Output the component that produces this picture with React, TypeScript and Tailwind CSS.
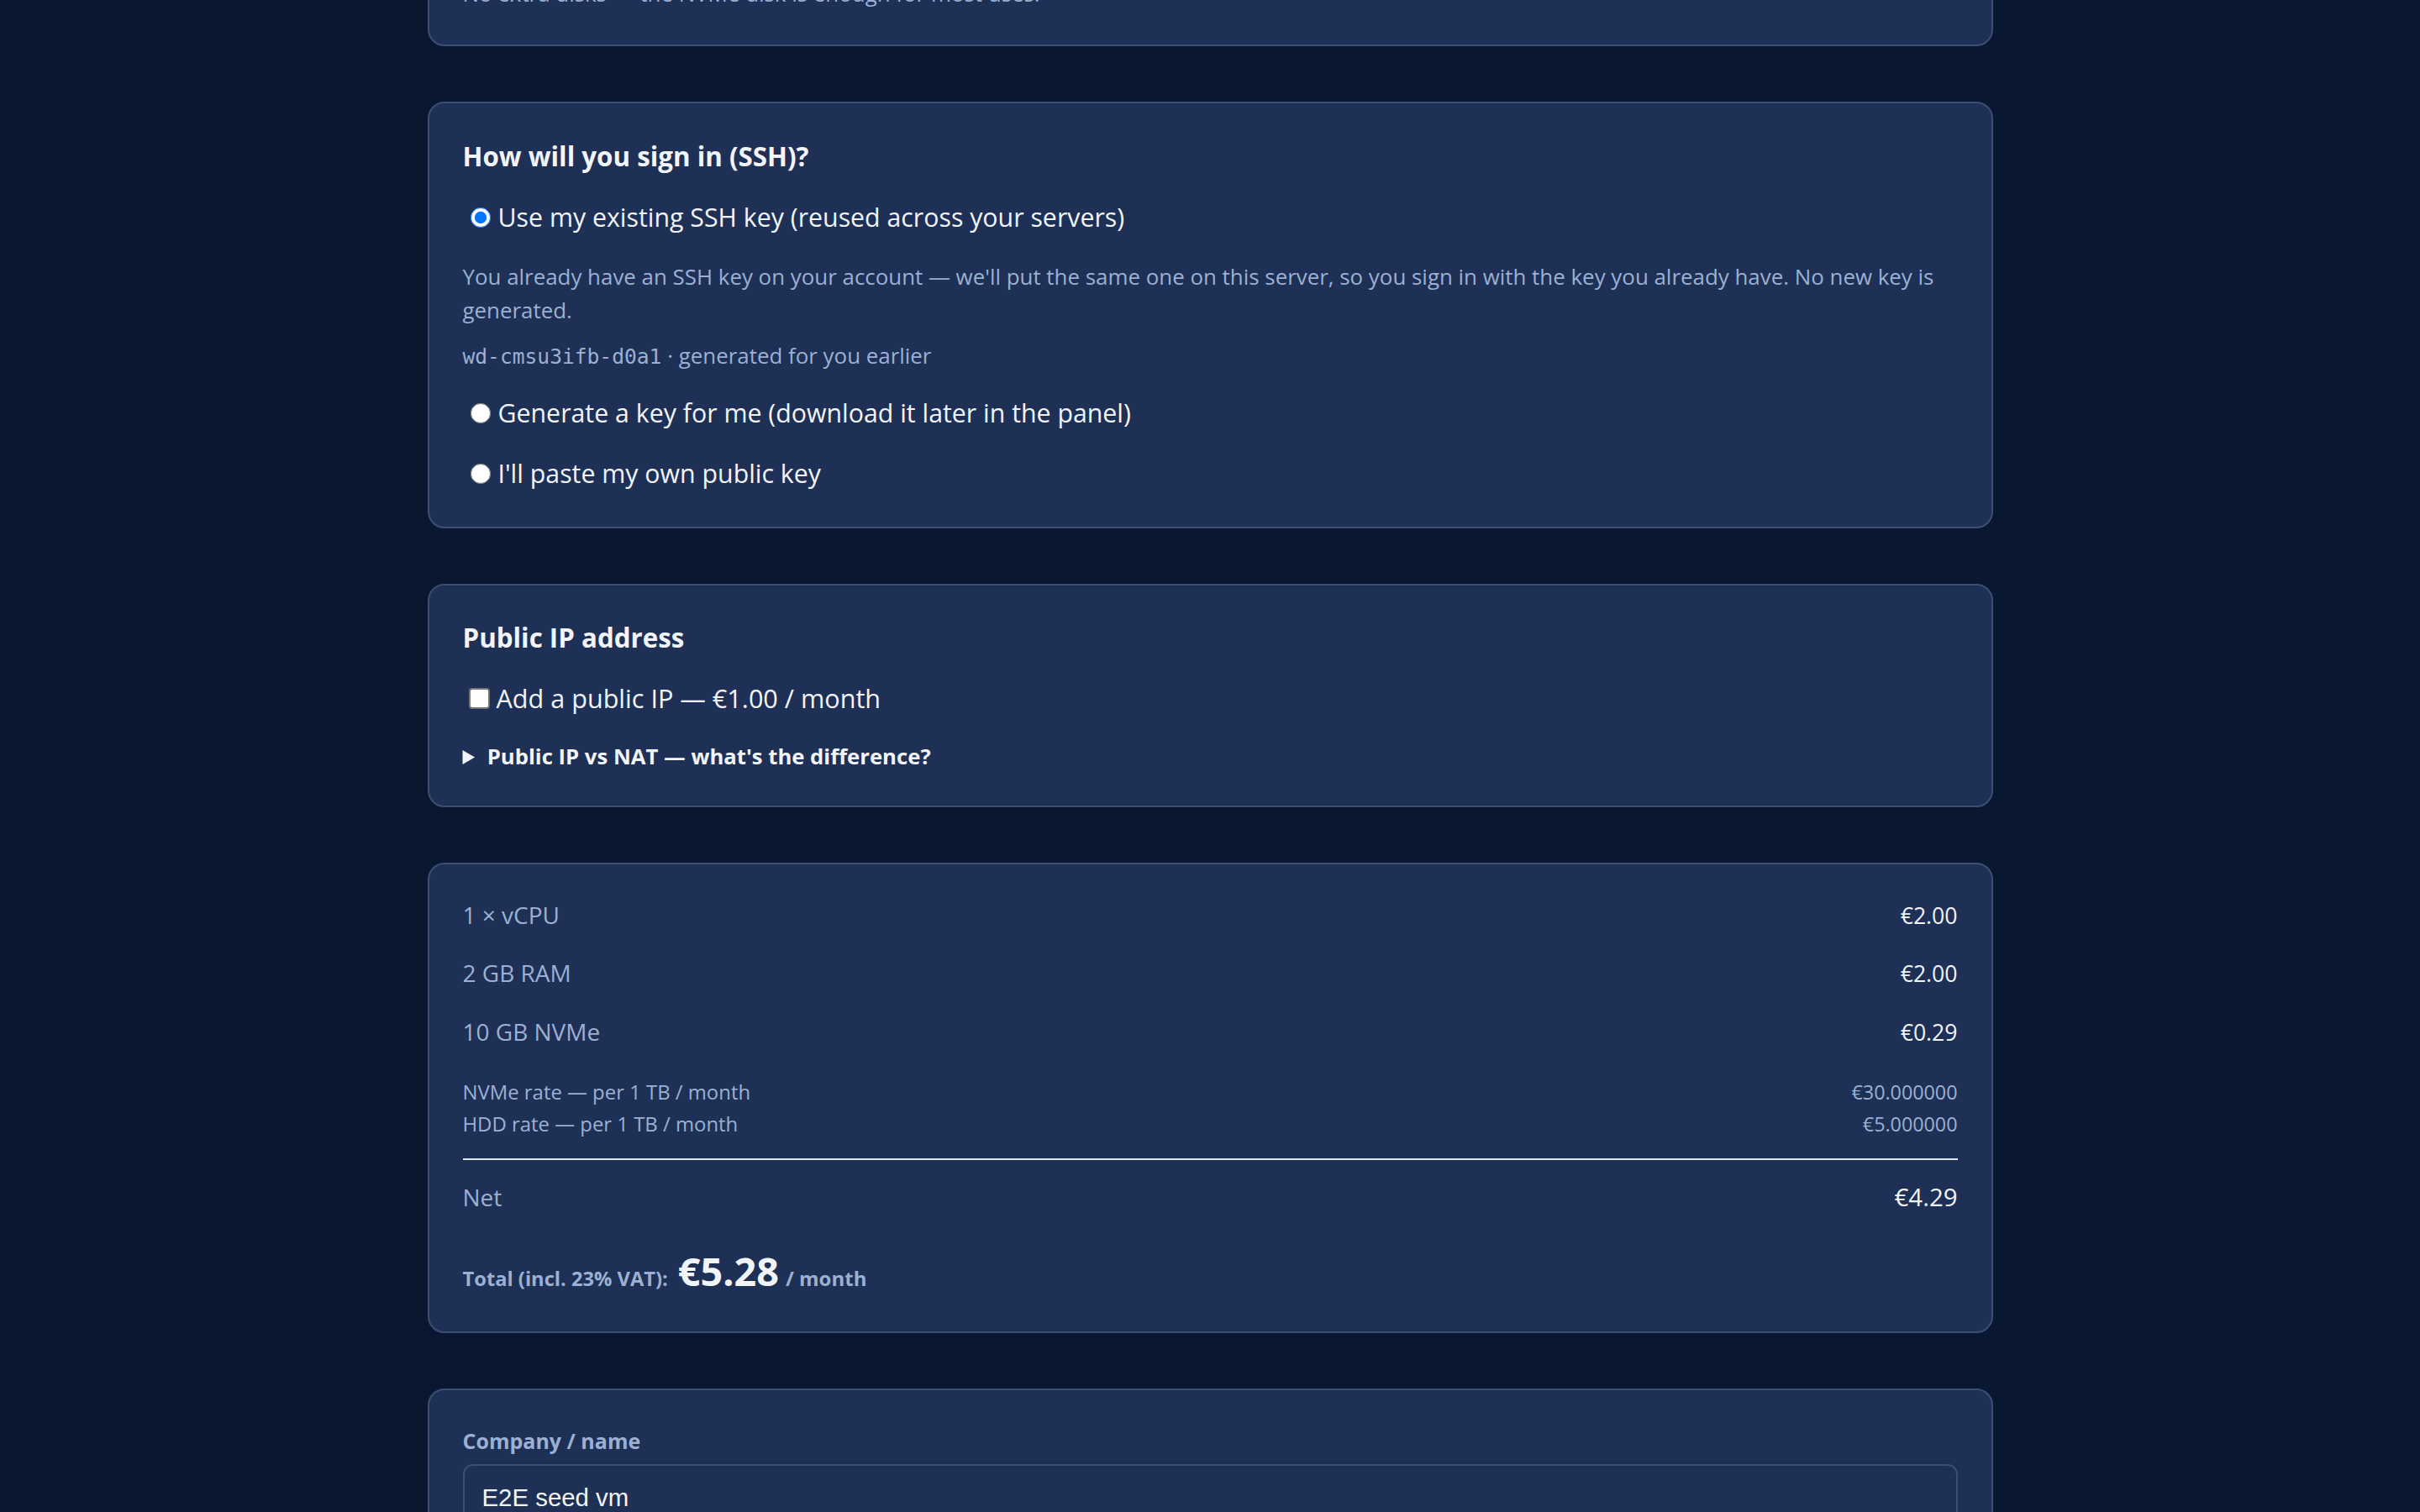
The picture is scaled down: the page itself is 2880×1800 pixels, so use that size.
import React from "react";

const card =
  "w-[1863px] mx-auto shrink-0 rounded-[20px] border-2 border-[#3b4e74] bg-[#1e3056] px-[40px]";

function Radio({ checked, label, className }: { checked?: boolean; label: string; className: string }) {
  return (
    <label className={"flex items-center leading-[40px] text-[30.3px] text-[#f1f5f9] " + className}>
      <input
        type="radio"
        name="ssh"
        defaultChecked={checked}
        className="ml-[9px] mr-[9px] h-[24px] w-[24px] shrink-0"
      />
      <span>{label}</span>
    </label>
  );
}

function PriceRow({ label, value, className }: { label: string; value: string; className: string }) {
  return (
    <div className={"flex items-baseline justify-between leading-[38px] " + className}>
      <span className="text-[28px] text-[#9bb0d3]">{label}</span>
      <span className="text-[26.6px] text-[#f1f5f9]">{value}</span>
    </div>
  );
}

export default function App() {
  return (
    <div
      className="flex min-h-screen flex-col gap-[66px] overflow-hidden bg-[#0a1730] pb-[200px]"
      style={{ fontFamily: '"Open Sans", "Noto Sans", sans-serif' }}
    >
      {/* Card 1 (mostly scrolled off) */}
      <section className={card + " mt-[-72px] pt-[42px] pb-[41px]"}>
        <p className="text-[25.9px] leading-[40px] text-[#9bb0d3]">
          No extra disks — the NVMe disk is enough for most uses.
        </p>
      </section>

      {/* SSH */}
      <section className={card + " pt-[42px] pb-[43px]"}>
        <h2 className="text-[31.3px] font-bold leading-[42px] text-[#f1f5f9]">How will you sign in (SSH)?</h2>
        <Radio checked label="Use my existing SSH key (reused across your servers)" className="mt-[32px]" />
        <p className="mt-[30px] text-[25.9px] leading-[40px] text-[#9bb0d3]">
          You already have an SSH key on your account — we'll put the same one on this server, so you sign in with the
          key you already have. No new key is generated.
        </p>
        <p className="mt-[16px] text-[25.9px] leading-[36px] text-[#9bb0d3]">
          <code className="text-[24.6px]" style={{ fontFamily: '"DejaVu Sans Mono", monospace' }}>
            wd-cmsu3ifb-d0a1
          </code>{" "}
          · generated for you earlier
        </p>
        <Radio label="Generate a key for me (download it later in the panel)" className="mt-[29px]" />
        <Radio label="I'll paste my own public key" className="mt-[32px]" />
      </section>

      {/* Public IP */}
      <section className={card + " pt-[41px] pb-[39px]"}>
        <h2 className="text-[31.3px] font-bold leading-[42px] text-[#f1f5f9]">Public IP address</h2>
        <label className="mt-[31px] flex items-center text-[30.6px] leading-[40px] text-[#f1f5f9]">
          <input
            type="checkbox"
            className="ml-[7px] mr-[8px] h-[25px] w-[25px] shrink-0 appearance-none rounded-[4px] border-2 border-[#767676] bg-white"
          />
          <span>Add a public IP — €1.00 / month</span>
        </label>
        <details className="mt-[31px]">
          <summary className="cursor-pointer text-[25.7px] font-bold leading-[38px] text-[#f1f5f9]">
            <span className="ml-[2px]">Public IP vs NAT — what's the difference?</span>
          </summary>
        </details>
      </section>

      {/* Pricing */}
      <section className={card + " pt-[41px] pb-[33px]"}>
        <PriceRow label="1 × vCPU" value="€2.00" className="" />
        <PriceRow label="2 GB RAM" value="€2.00" className="mt-[30px]" />
        <PriceRow label="10 GB NVMe" value="€0.29" className="mt-[31px]" />
        <div className="mt-[33px] text-[23.9px] leading-[38px] text-[#9bb0d3]">
          <div className="flex items-baseline justify-between">
            <span>NVMe rate — per 1 TB / month</span>
            <span className="text-[23.3px]">€30.000000</span>
          </div>
          <div className="flex items-baseline justify-between">
            <span>HDD rate — per 1 TB / month</span>
            <span className="text-[23.3px]">€5.000000</span>
          </div>
        </div>
        <div className="mt-[22px] h-[2px] bg-[#e2e8f0]" />
        <div className="mt-[24px] flex items-baseline justify-between leading-[40px]">
          <span className="text-[28px] text-[#9bb0d3]">Net</span>
          <span className="text-[29.4px] text-[#f1f5f9]">€4.29</span>
        </div>
        <div className="mt-[38px] flex items-baseline leading-[60px]">
          <span className="text-[23.7px] font-bold text-[#9bb0d3]">Total (incl. 23% VAT):</span>
          <span className="ml-[12px] text-[46.7px] font-bold text-[#f1f5f9]">€5.28</span>
          <span className="ml-[8px] text-[24px] font-bold text-[#9bb0d3]">/ month</span>
        </div>
      </section>

      {/* Company */}
      <section className={card + " pt-[42px] pb-[40px]"}>
        <label className="block text-[25px] font-bold leading-[36px] text-[#9bb0d3]">Company / name</label>
        <input
          defaultValue="E2E seed vm"
          className="mt-[10px] block w-full rounded-[12px] border-2 border-[#3b4e74] bg-[#1e3056] px-[21px] pt-[16px] pb-[22px] text-[29.4px] text-[#f1f5f9] outline-none"
          style={{ fontFamily: '"Liberation Sans", Arial, sans-serif' }}
        />
      </section>
    </div>
  );
}
